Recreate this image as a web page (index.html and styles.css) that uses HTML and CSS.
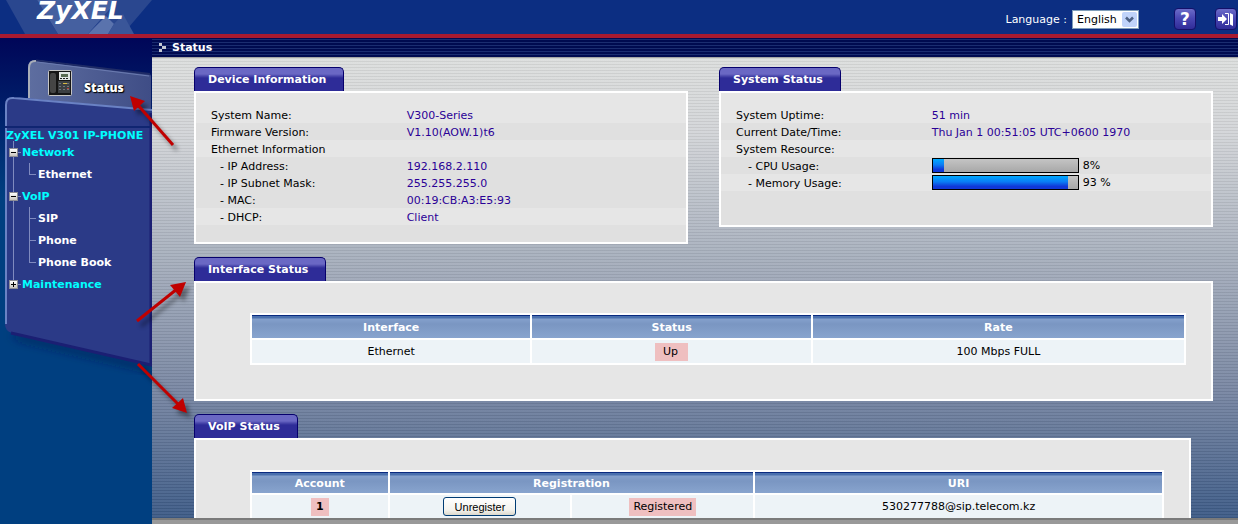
FILE: index.html
```
<!DOCTYPE html>
<html lang="en">
<head>
  <meta charset="UTF-8">
  <meta name="viewport" content="width=device-width, initial-scale=1.0">
  <title>ZyXEL V301 IP-PHONE</title>
  <link rel="stylesheet" href="styles.css">
</head>
<body>
  <header class="header">
    <svg class="header-shapes" width="160" height="34" viewBox="0 0 160 34">
      <polygon points="6,0 37,0 58,34 25,34" fill="#2a478f"/>
      <polygon points="37,0 118,0 88,34 58,34" fill="#4560a0"/>
      <polygon points="118,0 152,0 123,34 88,34" fill="#2a478f"/>
      <polygon points="88,34 106,16 114,24 108,34" fill="#5a73ad"/>
      <polygon points="114,24 123,14 134,34 108,34" fill="#3a5699"/>
    </svg>
    <div class="logo">ZyXEL</div>
    <div class="tools">
      <label for="language">Language :</label>
      <div class="select">
        <select id="language">
          <option>English</option>
        </select>
        <svg width="15" height="15" viewBox="0 0 15 15">
          <rect width="15" height="15" rx="2" fill="#c0d3fa"/>
          <path d="M4 5.500l3.500 3.500L11 5.500" fill="none" stroke="#4d6185" stroke-width="2.500"/>
        </svg>
      </div>
      <button class="icon-btn help" aria-label="Help">?</button>
      <button class="icon-btn" aria-label="Logout">
        <svg width="16" height="14" viewBox="0 0 16 14">
          <path d="M0 5h4V2l5 5-5 5V9H0z" fill="#fff"/>
          <path d="M7 1.500h3.500v11H7" fill="none" stroke="#fff"/>
          <path d="M12 1l3 1.500V14l-3-1.500z" fill="#fff"/>
        </svg>
      </button>
    </div>
  </header>

  <div class="page">
    <nav class="sidebar">
      <svg class="sidebar-bg" width="152" height="340" viewBox="0 38 152 340">
        <defs>
          <linearGradient id="tabFill" x1="0" y1="0" x2="1" y2="0">
            <stop offset="0" stop-color="#5e6ea0"/>
            <stop offset="1" stop-color="#3f4d86"/>
          </linearGradient>
          <filter id="soft"><feGaussianBlur stdDeviation="4"/></filter>
        </defs>
        <path d="M10 334L152 367v4L20 340z" fill="#001c50" filter="url(#soft)"/>
        <path d="M28 112V68q0-9 9-8L149 74q2 0 2 3v40z" fill="url(#tabFill)"/>
        <path d="M29 98V68q0-8 8-7" fill="none" stroke="#a9aeb8" stroke-width="2"/>
        <path d="M36 60.500L150 74" fill="none" stroke="#1e2b66" stroke-width="2"/>
        <path d="M37 62L149 76" fill="none" stroke="#6b7bb0"/>
        <path d="M5 324V105q0-9 9-8L152 110v256L12 333q-7-2-7-9z" fill="#2b3a87"/>
        <path d="M6 324V105q0-8 8-7L152 110" fill="none" stroke="#6a82c4" stroke-width="2"/>
        <path d="M11 333L151 365V113" fill="none" stroke="#1b1f73" stroke-width="3"/>
      </svg>

      <a class="status-link" href="#">
        <svg width="24" height="26" viewBox="0 0 24 26">
          <rect x="0.500" y="0.500" width="23" height="25" rx="1" fill="#151515" stroke="#c5c5c5"/>
          <rect x="2" y="3" width="6" height="20" rx="2" fill="#454545"/>
          <rect x="11" y="2" width="11" height="8" fill="#e2e5e2"/>
          <rect x="13" y="4" width="7" height="3" fill="#5a6b52"/>
          <path d="M12 8.500h9" stroke="#222" stroke-dasharray="2 1"/>
          <rect x="10" y="11" width="12" height="12" fill="#3c3f42"/>
          <path d="M11 13.500h10M11 16.500h10M11 19.500h10" stroke="#70757b" stroke-dasharray="2 2"/>
          <path d="M15 13.500h4" stroke="#d8b940"/>
          <path d="M19 18.500h2" stroke="#b43a3a"/>
        </svg>
        <span>Status</span>
      </a>

      <div class="tree-title">ZyXEL V301 IP-PHONE</div>
      <ul class="tree">
        <li>
          <a class="node" href="#"><i class="toggle minus"></i>Network</a>
          <ul>
            <li><a href="#">Ethernet</a></li>
          </ul>
        </li>
        <li>
          <a class="node" href="#"><i class="toggle minus"></i>VoIP</a>
          <ul>
            <li><a href="#">SIP</a></li>
            <li><a href="#">Phone</a></li>
            <li><a href="#">Phone Book</a></li>
          </ul>
        </li>
        <li>
          <a class="node" href="#"><i class="toggle plus"></i>Maintenance</a>
        </li>
      </ul>
    </nav>

    <main class="main">
      <h1 class="title">
        <svg width="7" height="9" viewBox="0 0 7 9">
          <path d="M0 0h3v3H0zM3 3h4v3H3zM0 6h3v3H0z" fill="#c3c8d2"/>
        </svg>
        Status
      </h1>

      <div class="content">
        <div class="row">
          <section class="panel">
            <h2>Device Information</h2>
            <div class="box info">
              <table>
                <tr><th>System Name:</th><td>V300-Series</td></tr>
                <tr class="dark"><th>Firmware Version:</th><td>V1.10(AOW.1)t6</td></tr>
                <tr><th>Ethernet Information</th><td></td></tr>
                <tr class="dark sub"><th>- IP Address:</th><td>192.168.2.110</td></tr>
                <tr class="dark sub"><th>- IP Subnet Mask:</th><td>255.255.255.0</td></tr>
                <tr class="dark sub"><th>- MAC:</th><td>00:19:CB:A3:E5:93</td></tr>
                <tr class="sub"><th>- DHCP:</th><td>Client</td></tr>
              </table>
            </div>
          </section>

          <section class="panel">
            <h2>System Status</h2>
            <div class="box info system">
              <table>
                <tr><th>System Uptime:</th><td>51 min</td></tr>
                <tr class="dark"><th>Current Date/Time:</th><td>Thu Jan 1 00:51:05 UTC+0600 1970</td></tr>
                <tr><th>System Resource:</th><td></td></tr>
                <tr class="dark sub">
                  <th>- CPU Usage:</th>
                  <td class="usage-cell"><div class="usage"><div class="bar"><div class="fill" style="width: 8%"></div></div>8%</div></td>
                </tr>
                <tr class="sub">
                  <th>- Memory Usage:</th>
                  <td class="usage-cell"><div class="usage"><div class="bar"><div class="fill" style="width: 93%"></div></div>93 %</div></td>
                </tr>
              </table>
            </div>
          </section>
        </div>

        <section class="panel interface">
          <h2>Interface Status</h2>
          <div class="box list">
            <table>
              <colgroup><col class="w30"><col class="w30"><col></colgroup>
              <tr><th>Interface</th><th>Status</th><th>Rate</th></tr>
              <tr><td>Ethernet</td><td><span class="mark up">Up</span></td><td>100 Mbps FULL</td></tr>
            </table>
          </div>
        </section>

        <section class="panel voip">
          <h2>VoIP Status</h2>
          <div class="box list">
            <table>
              <colgroup><col class="w15"><col class="w20"><col class="w20"><col></colgroup>
              <tr><th>Account</th><th colspan="2">Registration</th><th>URI</th></tr>
              <tr>
                <td><b class="mark">1</b></td>
                <td><button class="btn">Unregister</button></td>
                <td><span class="mark reg">Registered</span></td>
                <td>530277788@sip.telecom.kz</td>
              </tr>
            </table>
          </div>
        </section>
      </div>
      <div class="statusbar"></div>
    </main>
  </div>

  <!-- callout arrows -->
  <svg class="arrows" width="240" height="430" viewBox="0 0 240 430">
    <g stroke="#c00000" stroke-width="3" fill="none">
      <path d="M173 145L137 104"/>
      <path d="M137 321L177 289"/>
      <path d="M138 364L180 406"/>
    </g>
    <g fill="#c00000">
      <path d="M130 96l15 5-11 10z"/>
      <path d="M186 282l-16 3 10 12z"/>
      <path d="M187 413l-4-15-11 10z"/>
    </g>
  </svg>
</body>
</html>
```
FILE: styles.css
```
* {
  box-sizing: border-box;
}

body {
  margin: 0;
  height: 100vh;
  display: flex;
  flex-direction: column;
  overflow: hidden;
  font-family: Verdana, 'DejaVu Sans', sans-serif;
  font-size: 11px;
  color: #000;
}

a {
  text-decoration: none;
}

table {
  width: 100%;
  table-layout: fixed;
}

/* header */
.header {
  position: relative;
  flex: none;
  display: flex;
  justify-content: space-between;
  height: 38px;
  background-color: #0c2e82;
  border-bottom: 4px solid #a81a30;
}

.header-shapes {
  position: absolute;
  left: 0;
  top: 0;
}

.logo {
  position: relative;
  margin-left: 37px;
  font-family: 'DejaVu Sans', sans-serif;
  font-size: 25px;
  font-weight: bold;
  font-style: italic;
  line-height: 22px;
  color: #fff;
}

.tools {
  display: flex;
  align-items: center;
  padding: 4px 1px 0 0;
  color: #fff;
}

.select {
  position: relative;
  margin: 0 35px 0 5px;
}

.select select {
  display: block;
  width: 67px;
  height: 19px;
  padding: 0 0 0 4px;
  appearance: none;
  background-color: #fff;
  border: 1px solid #7f9db9;
  border-radius: 0;
  font: inherit;
  color: #000;
}

.select svg {
  position: absolute;
  right: 2px;
  top: 2px;
  pointer-events: none;
}

.icon-btn {
  display: flex;
  align-items: center;
  justify-content: center;
  width: 22px;
  height: 22px;
  padding: 0;
  border: 1px solid #14106a;
  border-radius: 4px;
  background: linear-gradient(#6c6cc8, #4a48b4 45%, #302c98);
  color: #fff;
}

.icon-btn.help {
  margin-right: 19px;
  font: bold 17px Verdana, 'DejaVu Sans', sans-serif;
}

.page {
  flex: 1;
  display: flex;
  min-height: 0;
}

/* sidebar */
.sidebar {
  position: relative;
  flex: none;
  width: 152px;
  background: linear-gradient(#000658, #003f80 160px);
  font-weight: bold;
}

.sidebar-bg {
  position: absolute;
  left: 0;
  top: 0;
}

.status-link {
  position: relative;
  display: flex;
  align-items: center;
  gap: 12px;
  margin-top: 32px;
  padding-left: 48px;
  height: 26px;
  font-family: 'Open Sans', sans-serif;
  font-size: 12px;
  font-weight: 800;
  color: #fff;
  text-shadow: 0 0 2px #000, 1px 1px 1px #000;
}

.status-link span {
  padding-top: 9px;
}

.tree-title {
  position: relative;
  margin: 30px 2px 0 5px;
  padding: 2px 0 0 1px;
  border-top: 2px solid #102572;
  line-height: 11px;
  white-space: nowrap;
  color: #00ffff;
}

.tree,
.tree ul {
  position: relative;
  margin: 0;
  padding: 0;
  list-style: none;
}

.tree::before {
  content: '';
  position: absolute;
  left: 13px;
  top: 0;
  bottom: 11px;
  border-left: 1px solid #7f8abf;
}

.tree a {
  display: flex;
  align-items: center;
  height: 22px;
  color: #fff;
}

.tree .node {
  position: relative;
  padding-left: 9px;
  color: #00ffff;
}

.toggle {
  position: relative;
  width: 9px;
  height: 9px;
  margin-right: 4px;
  background: linear-gradient(#fff, #c8c4bc);
  border: 1px solid #8d8d95;
}

.toggle::before,
.plus::after {
  content: '';
  position: absolute;
  left: 1px;
  top: 3px;
  width: 5px;
  height: 1px;
  background-color: #000;
}

.plus::after {
  left: 3px;
  top: 1px;
  width: 1px;
  height: 5px;
}

.tree .node::before {
  content: '';
  position: absolute;
  left: 18px;
  top: 11px;
  width: 3px;
  border-top: 1px solid #7f8abf;
}

.tree ul li {
  position: relative;
  padding-left: 38px;
}

.tree ul li::before,
.tree ul li::after {
  content: '';
  position: absolute;
  left: 29px;
  top: 0;
  width: 6px;
  height: 11px;
  border-left: 1px solid #7f8abf;
  border-bottom: 1px solid #7f8abf;
}

.tree ul li::after {
  height: 22px;
  border-bottom: none;
}

.tree ul li:last-child::after {
  display: none;
}

/* main area */
.main {
  flex: 1;
  display: flex;
  flex-direction: column;
  min-width: 0;
}

.title {
  flex: none;
  display: flex;
  align-items: center;
  gap: 6px;
  height: 20px;
  margin: 0;
  padding-left: 7px;
  border-bottom: 1px solid #a5a5a5;
  background: repeating-linear-gradient(#000a50 0 1px, #1b2c70 1px 2px, #000a50 2px 3px);
  font-size: 11px;
  color: #fff;
}

.content {
  flex: 1;
  min-height: 0;
  overflow: hidden;
  padding: 9px 25px 0 42px;
  background:
    repeating-linear-gradient(rgba(0, 0, 0, 0.06) 0 1px, rgba(255, 255, 255, 0.05) 1px 3px),
    linear-gradient(#dcdedd, #d3d5d8 16%, #a9b1be 42%, #7886a2 72%, #3c5a86);
}

.statusbar {
  flex: none;
  height: 6px;
  border-top: 2px solid #7a7a7a;
  background-color: #999;
}

.row {
  display: flex;
  align-items: flex-start;
  gap: 31px;
}

.row .panel {
  flex: 1;
  min-width: 0;
}

.panel h2 {
  width: fit-content;
  height: 24px;
  margin: 0;
  padding: 0 17px 0 13px;
  border: 1px solid #06006c;
  border-bottom: none;
  border-radius: 5px 5px 0 0;
  background: linear-gradient(#6a68c4 0 6px, #4a48ac 8px, #2e2c98 10px);
  font-size: 11px;
  line-height: 23px;
  color: #fff;
}

.box {
  border: 2px solid #fff;
  background-color: #e6e6e6;
}

.interface {
  margin-top: 13px;
}

.voip {
  margin: 13px 22px 0 0;
}

/* device and system tables */
.info {
  padding-bottom: 17px;
  background-color: #e0e0e0;
}

.info.system {
  padding-bottom: 34px;
}

.info table {
  border-collapse: collapse;
}

.info tr {
  height: 17px;
  background-color: #e6e6e6;
}

.info tr.dark {
  background-color: #e0e0e0;
}

.info th,
.info td {
  padding: 2px 0 0;
  line-height: 15px;
  text-align: left;
  white-space: nowrap;
}

.info th {
  width: 43%;
  padding-left: 15px;
  font-weight: normal;
}

.info td {
  color: #2a0096;
}

.info tr:first-child th,
.info tr:first-child td {
  padding-top: 15px;
}

.info .sub th {
  padding-left: 24px;
}

.info.system .sub th {
  padding-left: 27px;
}

.info .usage-cell {
  padding-top: 0;
}

.usage {
  display: flex;
  align-items: center;
  gap: 4px;
  height: 17px;
  color: #000;
}

.bar {
  width: 147px;
  height: 15px;
  border: 1px solid #000;
  background: linear-gradient(#c4c4c4, #a8a8a8);
}

.fill {
  height: 100%;
  background: linear-gradient(#00aaff, #0a7cf4 45%, #1038d8 80%);
}

/* interface and voip tables */
.list {
  padding: 30px 25px 34px 54px;
}

.list table {
  border-collapse: separate;
  border-spacing: 2px;
  background-color: #fff;
}

.w15 {
  width: 15%;
}

.w20 {
  width: 20%;
}

.w30 {
  width: 30%;
}

.list th {
  height: 23px;
  padding: 0;
  border-top: 1px solid #0a2a80;
  background: linear-gradient(#4a70ae 0 2px, #84a0cc 3px, #7a96c2 8px, #88a4ce);
  color: #fff;
}

.list td {
  height: 23px;
  padding: 0;
  background-color: #edf3f7;
  text-align: center;
}

.voip th {
  height: 21px;
}

.mark {
  display: inline-block;
  padding: 0 5px;
  background-color: #efbfc0;
  line-height: 18px;
}

.mark.up {
  padding: 0 10px 0 8px;
}

.mark.reg {
  padding: 0 4px;
}

.btn {
  display: block;
  width: 73px;
  height: 19px;
  margin: 0 auto;
  padding: 0;
  border: 1px solid #003c74;
  border-radius: 3px;
  background: linear-gradient(#fff, #f4f3ee 70%, #dcd8cc);
  font: 10px 'Liberation Sans', Arial, sans-serif;
  font-size: 11px;
  color: #000;
}

.arrows {
  position: absolute;
  left: 0;
  top: 0;
  pointer-events: none;
  filter: drop-shadow(4px 5px 2px rgba(0, 0, 0, 0.4));
}
```
